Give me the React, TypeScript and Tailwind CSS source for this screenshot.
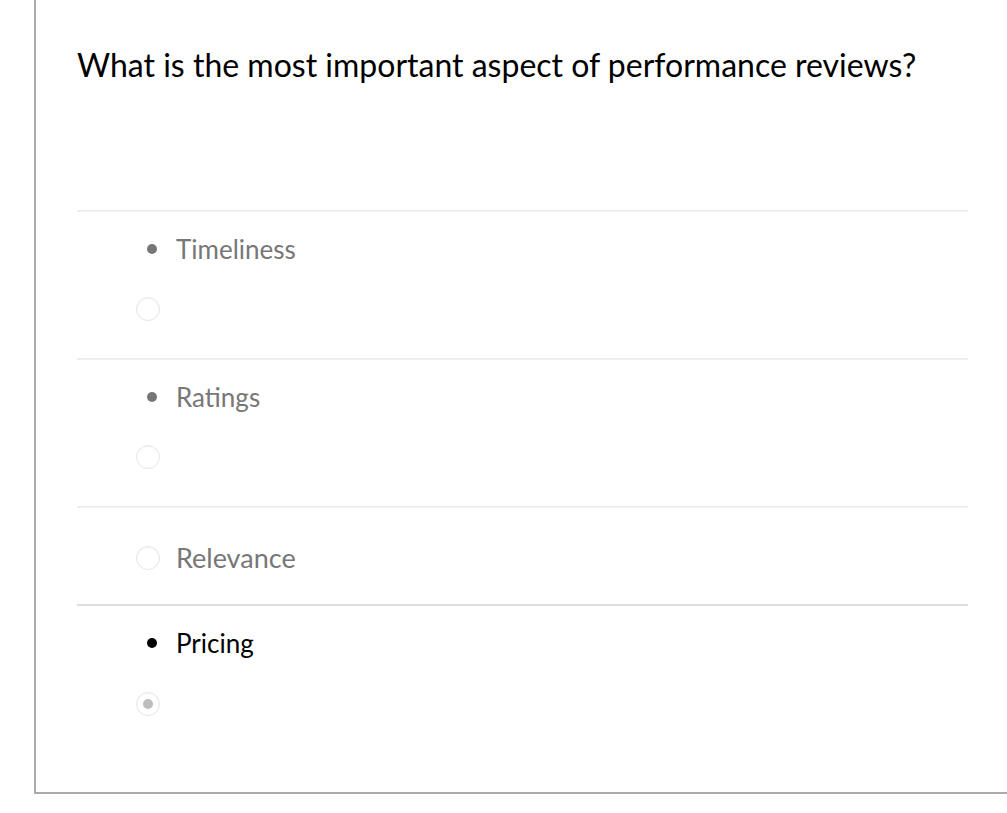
import React from "react";

function Radio({ checked = false }: { checked?: boolean }) {
  return (
    <span className="flex h-[24px] w-[24px] shrink-0 items-center justify-center rounded-full border border-[#e6e6e6] bg-white shadow-[inset_0_1px_2px_rgba(0,0,0,0.04)]">
      {checked && <span className="block h-[10px] w-[10px] rounded-full bg-[#bdbdbd]" />}
    </span>
  );
}

function Bullet({ dark = false }: { dark?: boolean }) {
  return (
    <span
      className={
        "block h-[10px] w-[10px] shrink-0 rounded-full " + (dark ? "bg-black" : "bg-[#777777]")
      }
    />
  );
}

export default function App() {
  return (
    <div className="min-h-[813px] bg-white" style={{ fontFamily: "Lato, 'Open Sans', sans-serif" }}>
      <div className="ml-[34px] h-[794px] border-b-2 border-l-2 border-[#aaaaaa] pl-[41px] pr-[39px] pt-[46px]">
        <h1 className="text-[32px] leading-[38px] font-normal text-black">
          What is the most important aspect of performance reviews?
        </h1>

        <div className="mt-[126px]">
          {/* Timeliness */}
          <div className="h-[148px] border-t-2 border-[#eeeeee] pt-[21px]">
            <div className="flex h-[32px] items-center pl-[70px]">
              <Bullet />
              <span className="ml-[19px] text-[26px] leading-[32px] text-[#777777]">Timeliness</span>
            </div>
            <div className="mt-[32px] pl-[59px]">
              <Radio />
            </div>
          </div>

          {/* Ratings */}
          <div className="h-[148px] border-t-2 border-[#eeeeee] pt-[21px]">
            <div className="flex h-[32px] items-center pl-[70px]">
              <Bullet />
              <span className="ml-[19px] text-[26px] leading-[32px] text-[#777777]">Ratings</span>
            </div>
            <div className="mt-[32px] pl-[59px]">
              <Radio />
            </div>
          </div>

          {/* Relevance */}
          <div className="h-[98px] border-t-2 border-[#eeeeee] pt-[34px]">
            <div className="flex h-[32px] items-center pl-[59px]">
              <Radio />
              <span className="ml-[16px] text-[27px] leading-[32px] text-[#777777]">Relevance</span>
            </div>
          </div>

          {/* Pricing */}
          <div className="border-t-2 border-[#dddddd] pt-[21px]">
            <div className="flex h-[32px] items-center pl-[70px]">
              <Bullet dark />
              <span className="ml-[19px] text-[26px] leading-[32px] text-black">Pricing</span>
            </div>
            <div className="mt-[33px] pl-[59px]">
              <Radio checked />
            </div>
          </div>
        </div>
      </div>
    </div>
  );
}
